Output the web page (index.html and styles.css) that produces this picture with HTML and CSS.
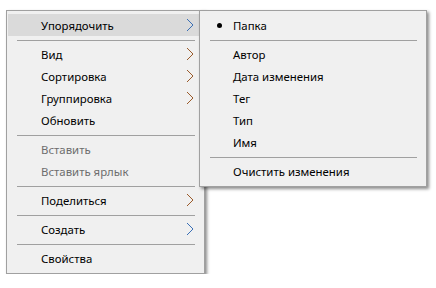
FILE: index.html
```html
<!DOCTYPE html>
<html lang="ru">
<head>
  <meta charset="UTF-8">
  <title>Контекстное меню</title>
  <link rel="stylesheet" href="styles.css">
</head>
<body>
  <div class="menus">
    <ul class="menu main-menu">
      <li class="item active">Упорядочить
        <svg class="arrow blue" width="8" height="14" viewBox="0 0 8 14"><polyline points="1,1 7,7 1,13"/></svg>
      </li>
      <li class="sep"></li>
      <li class="item">Вид
        <svg class="arrow orange" width="8" height="14" viewBox="0 0 8 14"><polyline points="1,1 7,7 1,13"/></svg>
      </li>
      <li class="item">Сортировка
        <svg class="arrow orange" width="8" height="14" viewBox="0 0 8 14"><polyline points="1,1 7,7 1,13"/></svg>
      </li>
      <li class="item">Группировка
        <svg class="arrow orange" width="8" height="14" viewBox="0 0 8 14"><polyline points="1,1 7,7 1,13"/></svg>
      </li>
      <li class="item">Обновить</li>
      <li class="sep"></li>
      <li class="item disabled">Вставить</li>
      <li class="item disabled">Вставить ярлык</li>
      <li class="sep"></li>
      <li class="item">Поделиться
        <svg class="arrow orange" width="8" height="14" viewBox="0 0 8 14"><polyline points="1,1 7,7 1,13"/></svg>
      </li>
      <li class="sep"></li>
      <li class="item">Создать
        <svg class="arrow blue" width="8" height="14" viewBox="0 0 8 14"><polyline points="1,1 7,7 1,13"/></svg>
      </li>
      <li class="sep"></li>
      <li class="item">Свойства</li>
    </ul>

    <ul class="menu sub-menu">
      <li class="item checked">Папка</li>
      <li class="sep"></li>
      <li class="item">Автор</li>
      <li class="item">Дата изменения</li>
      <li class="item">Тег</li>
      <li class="item">Тип</li>
      <li class="item">Имя</li>
      <li class="sep"></li>
      <li class="item">Очистить изменения</li>
    </ul>
  </div>
</body>
</html>
```

FILE: styles.css
```css
body {
  margin: 0;
  background: #fff;
  font-family: 'Segoe UI', 'Noto Sans', Arial, sans-serif;
  font-size: 11.4px;
  color: #000;
}
.menus {
  display: flex;
  align-items: flex-start;
  padding: 10px 0 0 6px;
}
.menu {
  list-style: none;
  margin: 0;
  padding: 3px 1px 4px 1px;
  background: #f0f0f0;
  border: 1px solid #a0a0a0;
  box-sizing: border-box;
  box-shadow: 2px 2px 3px rgba(0, 0, 0, 0.45);
}
.main-menu {
  width: 199px;
}
.sub-menu {
  width: 228px;
  margin-left: -6px;
  position: relative;
  z-index: 1;
}
.item {
  height: 22px;
  line-height: 23px;
  padding-left: 33px;
  position: relative;
  white-space: nowrap;
}
.sub-menu .item {
  padding-left: 32px;
}
.item.active {
  background: #dadada;
}
.item.disabled {
  color: #6d6d6d;
}
.item.checked::before {
  content: '';
  position: absolute;
  left: 16px;
  top: 9px;
  width: 5px;
  height: 5px;
  border-radius: 50%;
  background: #000;
}
.sep {
  height: 1px;
  margin: 4px 8px 2px 9px;
  background: #a0a0a0;
}
.arrow {
  position: absolute;
  right: 9px;
  top: 4px;
  fill: none;
  stroke-width: 1;
}
.arrow.blue {
  stroke: #3a6fb5;
}
.arrow.orange {
  stroke: #9a5a2a;
}
```
